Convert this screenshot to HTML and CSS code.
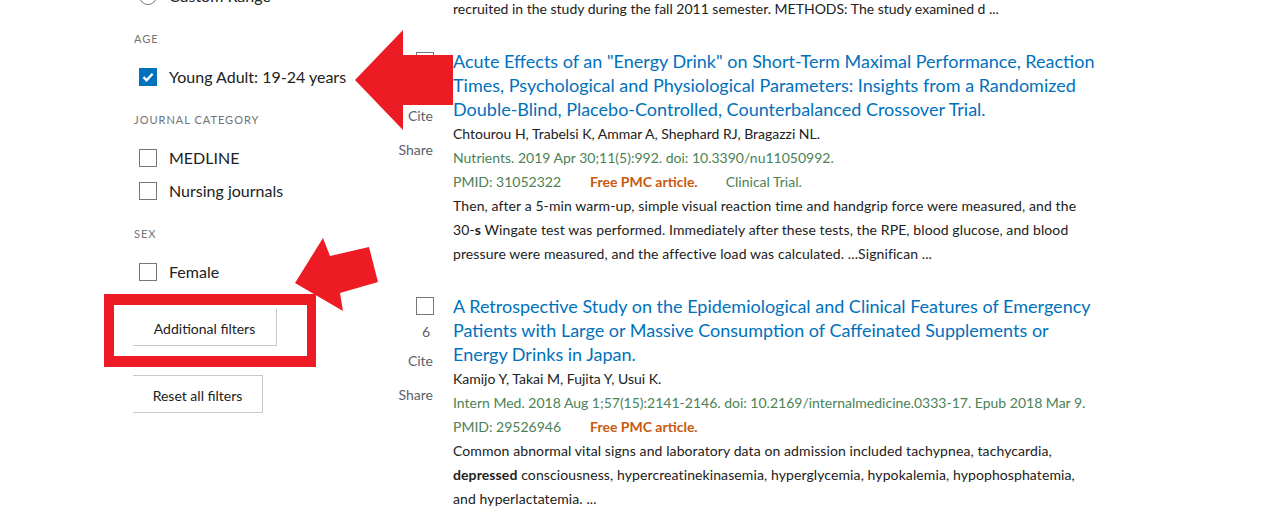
FILE: index.html
```html
<!DOCTYPE html>
<html lang="en">
<head>
<meta charset="utf-8" />
<title>PubMed search results</title>
<link rel="stylesheet" href="styles.css">
</head>
<body>
	<div class="page">
		<div class="filters">
			<div class="filterGroup">
				<label class="option"><span class="radio"></span>Custom Range</label>
			</div>
			<div class="filterGroup">
				<h3 class="groupTitle">AGE</h3>
				<label class="option">
					<span class="check checked">
						<svg width="18" height="18" viewBox="0 0 18 18"><path d="M4.5 9.2 L7.6 12.2 L13.6 5.8" fill="none" stroke="#fff" stroke-width="2.4"/></svg>
					</span>Young Adult: 19-24 years</label>
			</div>
			<div class="filterGroup">
				<h3 class="groupTitle">JOURNAL CATEGORY</h3>
				<label class="option"><span class="check"></span>MEDLINE</label>
				<label class="option"><span class="check"></span>Nursing journals</label>
			</div>
			<div class="filterGroup">
				<h3 class="groupTitle">SEX</h3>
				<label class="option"><span class="check"></span>Female</label>
			</div>
			<div class="filterButtons">
				<button class="button buttonOpen">Additional filters</button>
				<button class="button">Reset all filters</button>
			</div>
		</div>

		<div class="results">
			<div class="snippet">recruited in the study during the fall 2011 semester. METHODS: The study examined d ...</div>

			<div class="article">
				<div class="articleSide">
					<span class="check"></span>
					<span class="citedBy">3</span>
					<span class="sideLink">Cite</span>
					<span class="sideLink">Share</span>
				</div>
				<div class="articleBody">
					<a class="title" href="#">Acute Effects of an "Energy Drink" on Short-Term Maximal Performance, Reaction Times, Psychological and Physiological Parameters: Insights from a Randomized Double-Blind, Placebo-Controlled, Counterbalanced Crossover Trial.</a>
					<div class="authors">Chtourou H, Trabelsi K, Ammar A, Shephard RJ, Bragazzi NL.</div>
					<div class="citation">Nutrients. 2019 Apr 30;11(5):992. doi: 10.3390/nu11050992.</div>
					<div class="citation"><span class="pmid">PMID: 31052322</span><span class="freePmc">Free PMC article.</span><span class="pubType">Clinical Trial.</span></div>
					<div class="snippet">Then, after a 5-min warm-up, simple visual reaction time and handgrip force were measured, and the <span class="nowrap">30-<b>s</b></span> Wingate test was performed. Immediately after these tests, the RPE, blood glucose, and blood pressure were measured, and the affective load was calculated. ...Significan ...</div>
				</div>
			</div>

			<div class="article">
				<div class="articleSide">
					<span class="check"></span>
					<span class="citedBy">6</span>
					<span class="sideLink">Cite</span>
					<span class="sideLink">Share</span>
				</div>
				<div class="articleBody">
					<a class="title" href="#">A Retrospective Study on the Epidemiological and Clinical Features of Emergency Patients with Large or Massive Consumption of Caffeinated Supplements or Energy Drinks in Japan.</a>
					<div class="authors">Kamijo Y, Takai M, Fujita Y, Usui K.</div>
					<div class="citation">Intern Med. 2018 Aug 1;57(15):2141-2146. doi: 10.2169/internalmedicine.0333-17. Epub 2018 Mar 9.</div>
					<div class="citation"><span class="pmid">PMID: 29526946</span><span class="freePmc">Free PMC article.</span></div>
					<div class="snippet">Common abnormal vital signs and laboratory data on admission included tachypnea, tachycardia, <b>depressed</b> consciousness, hypercreatinekinasemia, hyperglycemia, hypokalemia, hypophosphatemia, and hyperlactatemia. ...</div>
				</div>
			</div>
		</div>
	</div>

	<!-- annotations drawn over the screenshot -->
	<svg class="annotations" width="1264" height="521" viewBox="0 0 1264 521">
		<polygon points="355,80 403,30 403,55 453,55 453,105 403,105 403,130" fill="#ed1c24"/>
		<polygon points="295,283 323,238 330,256 369,247 378,282 340,293 343,311" fill="#ed1c24"/>
		<path d="M104 294 H316 V367 H104 Z M114 305 V356 H307 V305 Z" fill="#ed1c24" fill-rule="evenodd"/>
	</svg>
</body>
</html>
```

FILE: styles.css
```css
html {
	font-family: Lato, "Open Sans", sans-serif;
	color: #212121;
}

body {
	margin: 0;
	overflow: hidden;
	background: #fff;
}

.page {
	display: flex;
	align-items: flex-start;
}

.filters {
	box-sizing: border-box;
	width: 380px;
	padding-left: 134px;
	margin-top: -21px;
	flex-shrink: 0;
}

.filterGroup {
	margin-bottom: 16px;
}

.groupTitle {
	margin: 0 0 11px 0;
	font-size: 11px;
	font-weight: normal;
	line-height: 21px;
	letter-spacing: 1px;
	color: #6f7377;
}

.option {
	display: flex;
	align-items: center;
	height: 33px;
	font-size: 16px;
	padding-left: 5px;
}

.check {
	box-sizing: border-box;
	display: inline-block;
	width: 18px;
	height: 18px;
	border: 1px solid #75787b;
	background: #fff;
	flex-shrink: 0;
}

.option .check,
.option .radio {
	margin-right: 12px;
}

.check.checked {
	border-color: #0071bc;
	background: #0071bc;
}

.check svg {
	display: block;
	margin: -1px;
}

.radio {
	box-sizing: border-box;
	display: inline-block;
	width: 18px;
	height: 18px;
	border: 1px solid #75787b;
	border-radius: 50%;
}

.filterButtons {
	padding-top: 5px;
	margin-left: -1px;
}

.button {
	display: block;
	box-sizing: border-box;
	background: #fff;
	border: none;
	border-right: 1px solid #c8c8c8;
	border-bottom: 1px solid #c8c8c8;
	border-top: 1px solid #c8c8c8;
	font-family: inherit;
	font-size: 14px;
	color: #212121;
	height: 38px;
	width: 130px;
	padding: 3px 0 0 0;
}

.buttonOpen {
	border-top: none;
	width: 144px;
	height: 37px;
	margin-bottom: 29px;
}

.results {
	margin-top: -3px;
	width: 716px;
}

.snippet {
	font-size: 14px;
	line-height: 24px;
}

.articleBody .snippet {
	letter-spacing: 0.1px;
}

.nowrap {
	white-space: nowrap;
}

.results > .snippet {
	padding-left: 73px;
}

.article {
	display: grid;
	grid-template-columns: 57px 1fr;
	column-gap: 16px;
	margin-top: 28px;
}

.articleSide {
	display: flex;
	flex-direction: column;
	align-items: flex-end;
	padding-right: 3px;
	font-size: 14px;
	color: #5b616b;
}

.articleSide .check {
	margin-top: 3px;
}

.citedBy {
	line-height: 24px;
	margin-top: 5px;
	padding-right: 4px;
}

.sideLink {
	line-height: 34px;
	padding-right: 1px;
}

.title {
	display: block;
	font-size: 18px;
	line-height: 24px;
	color: #0071bc;
	text-decoration: none;
}

.authors {
	padding-top: 1px;
}

.authors,
.citation {
	font-size: 14px;
	line-height: 24px;
}

.citation {
	color: #4b8256;
}

.freePmc {
	margin-left: 29px;
	font-weight: bold;
	color: #c8590e;
}

.pubType {
	margin-left: 28px;
}

.annotations {
	position: absolute;
	left: 0;
	top: 0;
}
```
